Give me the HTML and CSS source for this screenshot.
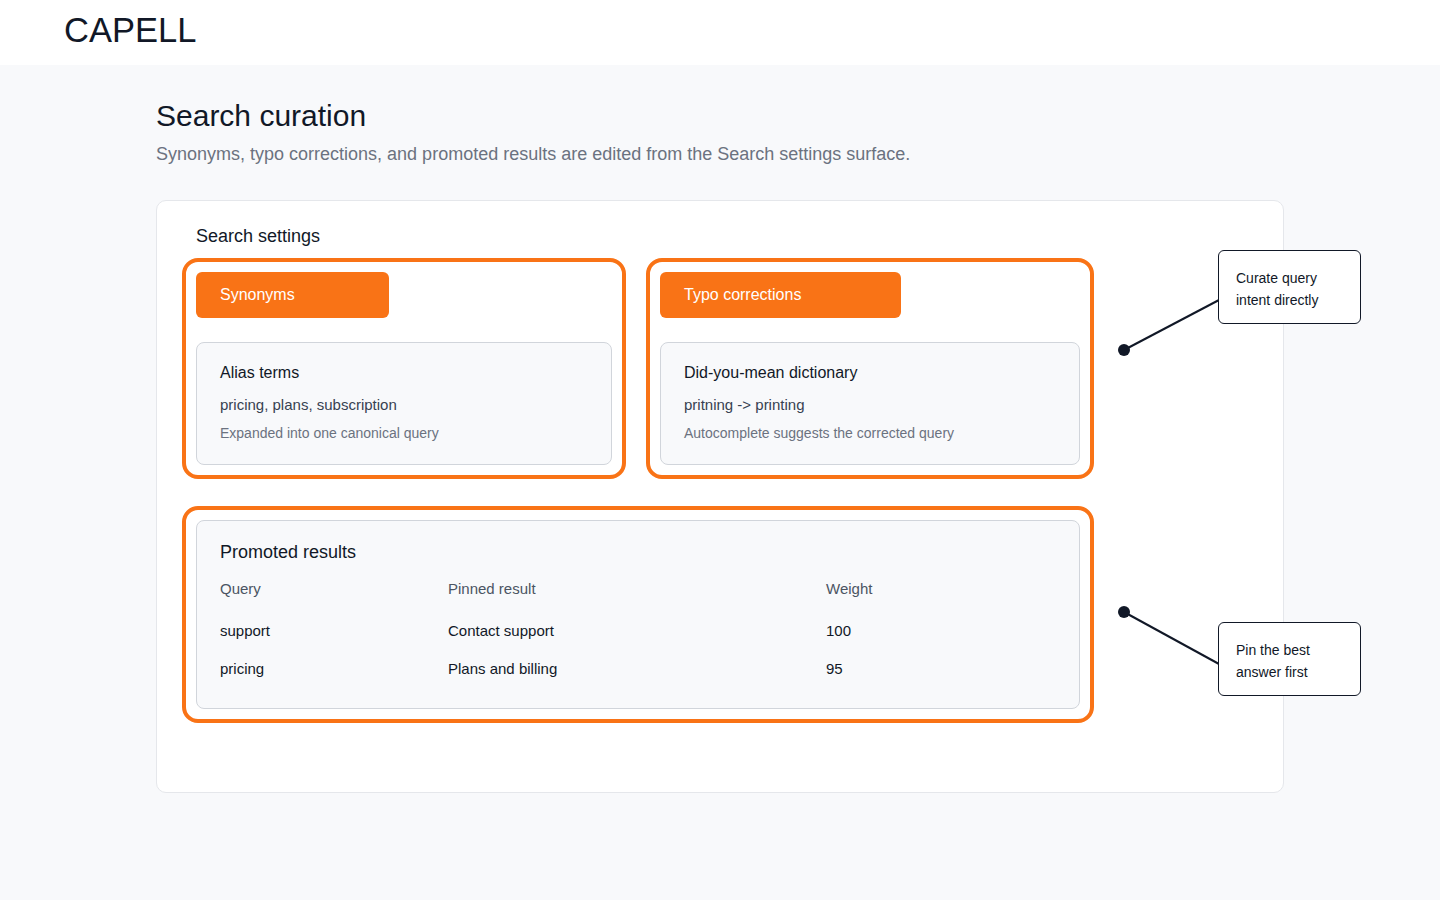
FILE: index.html
```html
<!DOCTYPE html>
<html lang="en">
<head>
    <meta charset="UTF-8">
    <meta name="viewport" content="width=device-width, initial-scale=1.0">
    <title>Capell - Search curation</title>
    <link rel="stylesheet" href="styles.css">
</head>
<body>
    <div class="page">
        <header class="topbar">
            <div class="brand">CAPELL</div>
        </header>

        <main class="container">
            <h1 class="page-title">Search curation</h1>
            <p class="page-subtitle">Synonyms, typo corrections, and promoted results are edited from the Search settings surface.</p>

            <section class="settings-card">
                <h2 class="settings-title">Search settings</h2>

                <div class="settings-grid">
                    <div class="section highlight">
                        <button class="tab-btn tab-synonyms">Synonyms</button>
                        <div class="panel">
                            <div class="panel-title">Alias terms</div>
                            <div class="panel-value">pricing, plans, subscription</div>
                            <div class="panel-note">Expanded into one canonical query</div>
                        </div>
                    </div>

                    <div class="section highlight">
                        <button class="tab-btn tab-typo">Typo corrections</button>
                        <div class="panel">
                            <div class="panel-title">Did-you-mean dictionary</div>
                            <div class="panel-value">pritning -&gt; printing</div>
                            <div class="panel-note">Autocomplete suggests the corrected query</div>
                        </div>
                    </div>

                    <div class="section section-wide highlight">
                        <div class="panel panel-table">
                            <div class="panel-title title-lg">Promoted results</div>
                            <div class="promo-table">
                                <div class="promo-row promo-head">
                                    <span>Query</span>
                                    <span>Pinned result</span>
                                    <span>Weight</span>
                                </div>
                                <div class="promo-row">
                                    <span>support</span>
                                    <span>Contact support</span>
                                    <span>100</span>
                                </div>
                                <div class="promo-row">
                                    <span>pricing</span>
                                    <span>Plans and billing</span>
                                    <span>95</span>
                                </div>
                            </div>
                        </div>
                    </div>
                </div>
            </section>
        </main>

        <!-- annotations -->
        <svg class="connectors" width="1440" height="900" viewBox="0 0 1440 900">
            <line x1="1124" y1="350" x2="1219" y2="300" stroke="#111827" stroke-width="2"/>
            <circle cx="1124" cy="350" r="6" fill="#111827"/>
            <line x1="1124" y1="612" x2="1219" y2="664" stroke="#111827" stroke-width="2"/>
            <circle cx="1124" cy="612" r="6" fill="#111827"/>
        </svg>
        <div class="callout callout-top">Curate query<br>intent directly</div>
        <div class="callout callout-bottom">Pin the best<br>answer first</div>
    </div>
</body>
</html>
```

FILE: styles.css
```css
:root {
    --orange: #f97316;
    --text-dark: #111827;
    --text-body: #374151;
    --text-muted: #6b7280;
    --bg: #f8f9fb;
    --border: #e5e7eb;
    --border-strong: #d1d5db;
}

* {
    margin: 0;
    padding: 0;
    box-sizing: border-box;
    font-family: 'Liberation Sans', Arial, sans-serif;
}

body {
    background-color: var(--bg);
    color: var(--text-dark);
}

.page {
    position: relative;
    min-height: 900px;
}

.topbar {
    background: white;
    height: 65px;
    padding: 10px 64px 15px;
}

.brand {
    font-size: 34.5px;
    line-height: 40px;
    color: var(--text-dark);
}

.container {
    width: 1128px;
    margin: 0 auto;
    padding-top: 33px;
}

.page-title {
    font-size: 30px;
    line-height: 36px;
    font-weight: 400;
    color: var(--text-dark);
}

.page-subtitle {
    margin-top: 7px;
    font-size: 18px;
    line-height: 26px;
    color: var(--text-muted);
}

.settings-card {
    margin-top: 33px;
    background: white;
    border: 1px solid var(--border);
    border-radius: 10px;
    padding: 23px 39px 83px;
}

.settings-title {
    font-size: 18px;
    line-height: 24px;
    font-weight: 400;
    color: var(--text-dark);
}

.settings-grid {
    width: 884px;
    margin-top: 24px;
    display: grid;
    grid-template-columns: 416px 1fr;
    column-gap: 48px;
    row-gap: 55px;
}

.section {
    display: flex;
    flex-direction: column;
    align-items: flex-start;
    gap: 24px;
}

.section-wide {
    grid-column: 1 / -1;
}

.highlight {
    outline: 4px solid var(--orange);
    outline-offset: 10px;
    border-radius: 2px;
}

.tab-btn {
    height: 46px;
    padding: 0 24px;
    border: none;
    border-radius: 6px;
    background-color: var(--orange);
    color: white;
    font-size: 16px;
    text-align: left;
    cursor: pointer;
}

.tab-synonyms {
    width: 193px;
}

.tab-typo {
    width: 241px;
}

.panel {
    align-self: stretch;
    background: var(--bg);
    border: 1px solid var(--border-strong);
    border-radius: 8px;
    padding: 19px 23px 21px;
}

.panel-table {
    padding: 19px 23px 20px;
}

.panel-title {
    font-size: 16px;
    line-height: 22px;
    color: var(--text-dark);
}

.title-lg {
    font-size: 18px;
    line-height: 24px;
}

.panel-value {
    margin-top: 11px;
    font-size: 15px;
    line-height: 20px;
    color: var(--text-body);
}

.panel-note {
    margin-top: 8px;
    font-size: 14px;
    line-height: 20px;
    color: var(--text-muted);
}

.promo-table {
    margin-top: 6px;
}

.promo-row {
    display: grid;
    grid-template-columns: 228px 378px 1fr;
    padding: 9px 0;
    font-size: 15px;
    line-height: 20px;
    color: var(--text-dark);
}

.promo-head {
    margin-bottom: 4px;
    color: #4b5563;
}

.connectors {
    position: absolute;
    top: 0;
    left: 0;
    pointer-events: none;
}

.callout {
    position: absolute;
    left: 1218px;
    width: 143px;
    background: white;
    border: 1px solid var(--text-dark);
    border-radius: 6px;
    padding: 16px 17px 12px;
    font-size: 14px;
    line-height: 22px;
    color: var(--text-dark);
}

.callout-top {
    top: 250px;
}

.callout-bottom {
    top: 622px;
}
```
